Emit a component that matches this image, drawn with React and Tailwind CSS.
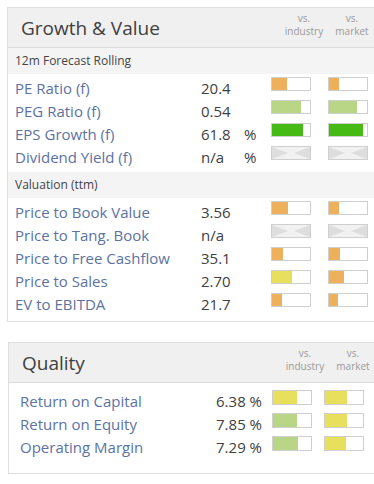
import React from 'react';

const COLORS = {
  orange: 'bg-[#eeb05b]',
  lgreen: 'bg-[#b8d685]',
  green: 'bg-[#46ba14]',
  yellow: 'bg-[#e8e05c]',
};

const Bar = ({ fill, color, h = 'h-[14px]' }) => {
  if (color === 'na') {
    return (
      <div className={`w-[40px] ${h} border border-[#cfcfcf] bg-[#f1f1f1]`}>
        <svg viewBox="0 0 38 12" preserveAspectRatio="none" className="w-full h-full block">
          <polygon points="0,0 16,6 0,12" fill="#dedede" />
          <polygon points="38,0 22,6 38,12" fill="#dedede" />
        </svg>
      </div>
    );
  }
  return (
    <div className={`w-[40px] ${h} border border-[#cfcfcf] bg-white flex`}>
      <div className={`h-full ${COLORS[color]}`} style={{ width: `${fill}px` }} />
    </div>
  );
};

const growth = [
  { label: 'PE Ratio (f)', value: '20.4', pct: '', ind: [15, 'orange'], mkt: [10, 'orange'] },
  { label: 'PEG Ratio (f)', value: '0.54', pct: '', ind: [29, 'lgreen'], mkt: [28, 'lgreen'] },
  { label: 'EPS Growth (f)', value: '61.8', pct: '%', ind: [31, 'green'], mkt: [34, 'green'] },
  { label: 'Dividend Yield (f)', value: 'n/a', pct: '%', ind: [0, 'na'], mkt: [0, 'na'] },
];

const valuation = [
  { label: 'Price to Book Value', value: '3.56', pct: '', ind: [16, 'orange'], mkt: [10, 'orange'] },
  { label: 'Price to Tang. Book', value: 'n/a', pct: '', ind: [0, 'na'], mkt: [0, 'na'] },
  { label: 'Price to Free Cashflow', value: '35.1', pct: '', ind: [11, 'orange'], mkt: [11, 'orange'] },
  { label: 'Price to Sales', value: '2.70', pct: '', ind: [20, 'yellow'], mkt: [15, 'orange'] },
  { label: 'EV to EBITDA', value: '21.7', pct: '', ind: [10, 'orange'], mkt: [9, 'orange'] },
];

const quality = [
  { label: 'Return on Capital', value: '6.38 %', ind: [24, 'yellow'], mkt: [22, 'yellow'] },
  { label: 'Return on Equity', value: '7.85 %', ind: [24, 'lgreen'], mkt: [22, 'yellow'] },
  { label: 'Operating Margin', value: '7.29 %', ind: [25, 'lgreen'], mkt: [21, 'yellow'] },
];

const PanelHeader = ({ title, pl }) => (
  <div className={`h-[40px] bg-[#f0f0f0] border-b border-[#dcdcdc] flex items-center pr-[10px] ${pl}`}>
    <h2 className="flex-1 text-[19px] font-normal text-[#404040] leading-none pt-[1px]">{title}</h2>
    <div className="flex text-[10px] leading-[13px] text-[#9a9a9a] text-center self-start pt-[4px]">
      <div className="w-[48px]">vs.<br />industry</div>
      <div className="w-[48px]">vs.<br />market</div>
    </div>
  </div>
);

const Row = ({ r }) => (
  <div className="flex items-start h-[23px]">
    <div className="w-[186px] text-[15px] leading-[23px] text-[#5c72a2]">{r.label}</div>
    <div className="w-[43px] text-[15px] leading-[23px] text-[#404040]">{r.value}</div>
    <div className="w-[27px] text-[15px] leading-[23px] text-[#404040]">{r.pct}</div>
    <div className="flex gap-[17px]">
      <Bar fill={r.ind[0]} color={r.ind[1]} />
      <Bar fill={r.mkt[0]} color={r.mkt[1]} />
    </div>
  </div>
);

const SubHeader = ({ children }) => (
  <div className="h-[26px] bg-[#f4f4f4] px-[7px] text-[12px] leading-[26px] text-[#444]">{children}</div>
);

export default function App() {
  return (
    <div className="w-[374px] h-[484px] overflow-hidden bg-white pt-[7px]" style={{ fontFamily: '"Open Sans", sans-serif' }}>
      <div className="ml-[7px] w-[380px] border border-[#dedede]">
        <PanelHeader title="Growth & Value" pl="pl-[13px]" />
        <SubHeader>12m Forecast Rolling</SubHeader>
        <div className="px-[7px] pt-[3px] pb-[3px]">
          {growth.map((r) => <Row key={r.label} r={r} />)}
        </div>
        <SubHeader>Valuation (ttm)</SubHeader>
        <div className="px-[7px] pt-[3px] pb-[5px]">
          {valuation.map((r) => <Row key={r.label} r={r} />)}
        </div>
      </div>

      <div className="ml-[8px] mt-[20px] w-[380px] border border-[#dedede]">
        <PanelHeader title="Quality" pl="pl-[13px]" />
        <div className="pl-[11px] pt-[7px] pb-[14px]">
          {quality.map((r) => (
            <div key={r.label} className="flex items-start h-[23px]">
              <div className="w-[150px] text-[15px] leading-[23px] text-[#5c72a2]">{r.label}</div>
              <div className="w-[92px] text-right text-[15px] leading-[23px] text-[#404040]">{r.value}</div>
              <div className="flex gap-[12px] ml-[10px]">
                <Bar fill={r.ind[0]} color={r.ind[1]} h="h-[15px]" />
                <Bar fill={r.mkt[0]} color={r.mkt[1]} h="h-[15px]" />
              </div>
            </div>
          ))}
        </div>
      </div>
    </div>
  );
}
